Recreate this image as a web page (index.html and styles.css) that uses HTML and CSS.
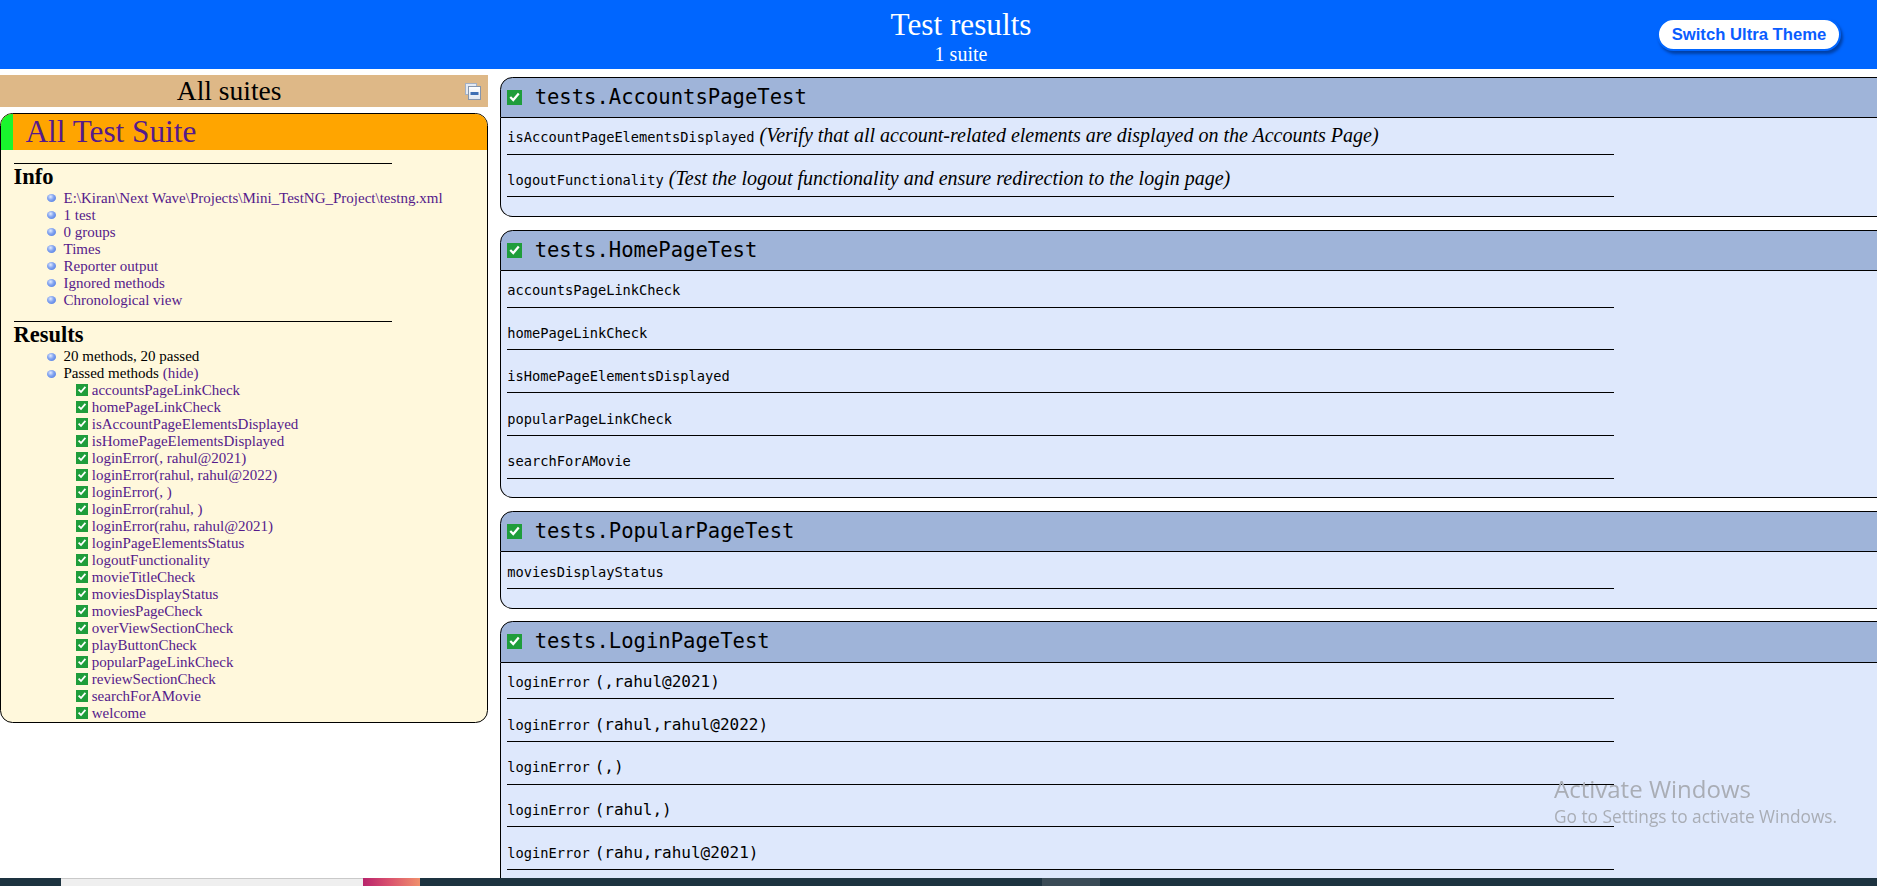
FILE: index.html
```html
<!DOCTYPE html>
<html lang="en">
<head>
<meta charset="utf-8">
<title>TestNG reports</title>
<link rel="stylesheet" href="styles.css">
</head>
<body>
<header class="banner">
  <div class="banner-title">
    <span class="title-main">Test results</span>
    <span class="title-sub">1 suite</span>
  </div>
  <button class="theme-button">Switch Ultra Theme</button>
</header>

<div class="layout">
  <nav class="navigator">
    <div class="nav-header">
      <span class="nav-header-text">All suites</span>
      <svg class="collapse-icon" width="16" height="17" viewBox="0 0 16 17">
        <defs>
          <linearGradient id="cg" x1="0" y1="0" x2="0" y2="1">
            <stop offset="0" stop-color="#ffffff"/>
            <stop offset="1" stop-color="#dfe6f0"/>
          </linearGradient>
        </defs>
        <rect x="0.5" y="0.5" width="11" height="11" fill="#e4eaf3" stroke="#a3b0c4"/>
        <rect x="3.5" y="3.5" width="12" height="13" fill="url(#cg)" stroke="#8595ad"/>
        <rect x="5.5" y="9" width="8" height="3" fill="#3d6eb3"/>
      </svg>
    </div>

    <div class="suite">
      <div class="suite-header">
        <a class="suite-name" href="#">All Test Suite</a>
      </div>
      <div class="suite-content">
        <div class="section-title">Info</div>
        <ul class="section-list">
          <li><a href="#">E:\Kiran\Next Wave\Projects\Mini_TestNG_Project\testng.xml</a></li>
          <li><a href="#">1 test</a></li>
          <li><a href="#">0 groups</a></li>
          <li><a href="#">Times</a></li>
          <li><a href="#">Reporter output</a></li>
          <li><a href="#">Ignored methods</a></li>
          <li><a href="#">Chronological view</a></li>
        </ul>
        <div class="section-title">Results</div>
        <ul class="section-list">
          <li>20 methods, 20 passed</li>
          <li>Passed methods <a href="#">(hide)</a>
            <div class="method-list">
              <div class="method-item"><svg class="ok" width="12" height="12" viewBox="0 0 12 12"><rect width="12" height="12" fill="#1f9d3b"/><path d="M2.6 5.6 L5 8 L9.4 2.8" fill="none" stroke="#fff" stroke-width="1.8"/></svg> <a href="#">accountsPageLinkCheck</a></div>
              <div class="method-item"><svg class="ok" width="12" height="12" viewBox="0 0 12 12"><rect width="12" height="12" fill="#1f9d3b"/><path d="M2.6 5.6 L5 8 L9.4 2.8" fill="none" stroke="#fff" stroke-width="1.8"/></svg> <a href="#">homePageLinkCheck</a></div>
              <div class="method-item"><svg class="ok" width="12" height="12" viewBox="0 0 12 12"><rect width="12" height="12" fill="#1f9d3b"/><path d="M2.6 5.6 L5 8 L9.4 2.8" fill="none" stroke="#fff" stroke-width="1.8"/></svg> <a href="#">isAccountPageElementsDisplayed</a></div>
              <div class="method-item"><svg class="ok" width="12" height="12" viewBox="0 0 12 12"><rect width="12" height="12" fill="#1f9d3b"/><path d="M2.6 5.6 L5 8 L9.4 2.8" fill="none" stroke="#fff" stroke-width="1.8"/></svg> <a href="#">isHomePageElementsDisplayed</a></div>
              <div class="method-item"><svg class="ok" width="12" height="12" viewBox="0 0 12 12"><rect width="12" height="12" fill="#1f9d3b"/><path d="M2.6 5.6 L5 8 L9.4 2.8" fill="none" stroke="#fff" stroke-width="1.8"/></svg> <a href="#">loginError(, rahul@2021)</a></div>
              <div class="method-item"><svg class="ok" width="12" height="12" viewBox="0 0 12 12"><rect width="12" height="12" fill="#1f9d3b"/><path d="M2.6 5.6 L5 8 L9.4 2.8" fill="none" stroke="#fff" stroke-width="1.8"/></svg> <a href="#">loginError(rahul, rahul@2022)</a></div>
              <div class="method-item"><svg class="ok" width="12" height="12" viewBox="0 0 12 12"><rect width="12" height="12" fill="#1f9d3b"/><path d="M2.6 5.6 L5 8 L9.4 2.8" fill="none" stroke="#fff" stroke-width="1.8"/></svg> <a href="#">loginError(, )</a></div>
              <div class="method-item"><svg class="ok" width="12" height="12" viewBox="0 0 12 12"><rect width="12" height="12" fill="#1f9d3b"/><path d="M2.6 5.6 L5 8 L9.4 2.8" fill="none" stroke="#fff" stroke-width="1.8"/></svg> <a href="#">loginError(rahul, )</a></div>
              <div class="method-item"><svg class="ok" width="12" height="12" viewBox="0 0 12 12"><rect width="12" height="12" fill="#1f9d3b"/><path d="M2.6 5.6 L5 8 L9.4 2.8" fill="none" stroke="#fff" stroke-width="1.8"/></svg> <a href="#">loginError(rahu, rahul@2021)</a></div>
              <div class="method-item"><svg class="ok" width="12" height="12" viewBox="0 0 12 12"><rect width="12" height="12" fill="#1f9d3b"/><path d="M2.6 5.6 L5 8 L9.4 2.8" fill="none" stroke="#fff" stroke-width="1.8"/></svg> <a href="#">loginPageElementsStatus</a></div>
              <div class="method-item"><svg class="ok" width="12" height="12" viewBox="0 0 12 12"><rect width="12" height="12" fill="#1f9d3b"/><path d="M2.6 5.6 L5 8 L9.4 2.8" fill="none" stroke="#fff" stroke-width="1.8"/></svg> <a href="#">logoutFunctionality</a></div>
              <div class="method-item"><svg class="ok" width="12" height="12" viewBox="0 0 12 12"><rect width="12" height="12" fill="#1f9d3b"/><path d="M2.6 5.6 L5 8 L9.4 2.8" fill="none" stroke="#fff" stroke-width="1.8"/></svg> <a href="#">movieTitleCheck</a></div>
              <div class="method-item"><svg class="ok" width="12" height="12" viewBox="0 0 12 12"><rect width="12" height="12" fill="#1f9d3b"/><path d="M2.6 5.6 L5 8 L9.4 2.8" fill="none" stroke="#fff" stroke-width="1.8"/></svg> <a href="#">moviesDisplayStatus</a></div>
              <div class="method-item"><svg class="ok" width="12" height="12" viewBox="0 0 12 12"><rect width="12" height="12" fill="#1f9d3b"/><path d="M2.6 5.6 L5 8 L9.4 2.8" fill="none" stroke="#fff" stroke-width="1.8"/></svg> <a href="#">moviesPageCheck</a></div>
              <div class="method-item"><svg class="ok" width="12" height="12" viewBox="0 0 12 12"><rect width="12" height="12" fill="#1f9d3b"/><path d="M2.6 5.6 L5 8 L9.4 2.8" fill="none" stroke="#fff" stroke-width="1.8"/></svg> <a href="#">overViewSectionCheck</a></div>
              <div class="method-item"><svg class="ok" width="12" height="12" viewBox="0 0 12 12"><rect width="12" height="12" fill="#1f9d3b"/><path d="M2.6 5.6 L5 8 L9.4 2.8" fill="none" stroke="#fff" stroke-width="1.8"/></svg> <a href="#">playButtonCheck</a></div>
              <div class="method-item"><svg class="ok" width="12" height="12" viewBox="0 0 12 12"><rect width="12" height="12" fill="#1f9d3b"/><path d="M2.6 5.6 L5 8 L9.4 2.8" fill="none" stroke="#fff" stroke-width="1.8"/></svg> <a href="#">popularPageLinkCheck</a></div>
              <div class="method-item"><svg class="ok" width="12" height="12" viewBox="0 0 12 12"><rect width="12" height="12" fill="#1f9d3b"/><path d="M2.6 5.6 L5 8 L9.4 2.8" fill="none" stroke="#fff" stroke-width="1.8"/></svg> <a href="#">reviewSectionCheck</a></div>
              <div class="method-item"><svg class="ok" width="12" height="12" viewBox="0 0 12 12"><rect width="12" height="12" fill="#1f9d3b"/><path d="M2.6 5.6 L5 8 L9.4 2.8" fill="none" stroke="#fff" stroke-width="1.8"/></svg> <a href="#">searchForAMovie</a></div>
              <div class="method-item"><svg class="ok" width="12" height="12" viewBox="0 0 12 12"><rect width="12" height="12" fill="#1f9d3b"/><path d="M2.6 5.6 L5 8 L9.4 2.8" fill="none" stroke="#fff" stroke-width="1.8"/></svg> <a href="#">welcome</a></div>
            </div>
          </li>
        </ul>
      </div>
    </div>
  </nav>

  <main class="wrapper">
    <section class="class-panel">
      <div class="panel-header"><svg class="ok-lg" width="15" height="15" viewBox="0 0 12 12"><rect width="12" height="12" fill="#1f9d3b"/><path d="M2.6 5.6 L5 8 L9.4 2.8" fill="none" stroke="#fff" stroke-width="1.8"/></svg> <span class="class-name">tests.AccountsPageTest</span></div>
      <div class="panel-content">
        <div class="method-content"><span class="method-name">isAccountPageElementsDisplayed</span> <em>(Verify that all account-related elements are displayed on the Accounts Page)</em></div>
        <div class="method-content"><span class="method-name">logoutFunctionality</span> <em>(Test the logout functionality and ensure redirection to the login page)</em></div>
      </div>
    </section>

    <section class="class-panel">
      <div class="panel-header"><svg class="ok-lg" width="15" height="15" viewBox="0 0 12 12"><rect width="12" height="12" fill="#1f9d3b"/><path d="M2.6 5.6 L5 8 L9.4 2.8" fill="none" stroke="#fff" stroke-width="1.8"/></svg> <span class="class-name">tests.HomePageTest</span></div>
      <div class="panel-content">
        <div class="method-content"><span class="method-name">accountsPageLinkCheck</span></div>
        <div class="method-content"><span class="method-name">homePageLinkCheck</span></div>
        <div class="method-content"><span class="method-name">isHomePageElementsDisplayed</span></div>
        <div class="method-content"><span class="method-name">popularPageLinkCheck</span></div>
        <div class="method-content"><span class="method-name">searchForAMovie</span></div>
      </div>
    </section>

    <section class="class-panel">
      <div class="panel-header"><svg class="ok-lg" width="15" height="15" viewBox="0 0 12 12"><rect width="12" height="12" fill="#1f9d3b"/><path d="M2.6 5.6 L5 8 L9.4 2.8" fill="none" stroke="#fff" stroke-width="1.8"/></svg> <span class="class-name">tests.PopularPageTest</span></div>
      <div class="panel-content">
        <div class="method-content"><span class="method-name">moviesDisplayStatus</span></div>
      </div>
    </section>

    <section class="class-panel">
      <div class="panel-header"><svg class="ok-lg" width="15" height="15" viewBox="0 0 12 12"><rect width="12" height="12" fill="#1f9d3b"/><path d="M2.6 5.6 L5 8 L9.4 2.8" fill="none" stroke="#fff" stroke-width="1.8"/></svg> <span class="class-name">tests.LoginPageTest</span></div>
      <div class="panel-content">
        <div class="method-content"><span class="method-name">loginError</span> <span class="parameters">(,rahul@2021)</span></div>
        <div class="method-content"><span class="method-name">loginError</span> <span class="parameters">(rahul,rahul@2022)</span></div>
        <div class="method-content"><span class="method-name">loginError</span> <span class="parameters">(,)</span></div>
        <div class="method-content"><span class="method-name">loginError</span> <span class="parameters">(rahul,)</span></div>
        <div class="method-content"><span class="method-name">loginError</span> <span class="parameters">(rahu,rahul@2021)</span></div>
      </div>
    </section>
  </main>
</div>

<div class="activate">
  <div class="activate-title">Activate Windows</div>
  <div class="activate-sub">Go to Settings to activate Windows.</div>
</div>

<div class="taskbar">
  <span class="tb-gap tb-start"></span>
  <span class="tb-window"></span>
  <span class="tb-app"></span>
  <span class="tb-gap tb-mid"></span>
  <span class="tb-tray"></span>
</div>
</body>
</html>
```

FILE: styles.css
```css
html {
  overflow: hidden;
}

body {
  margin: 0;
  width: 1922px;
  height: 886px;
  overflow: hidden;
  font-family: "Liberation Serif", "Times New Roman", serif;
  background: #ffffff;
  color: #000000;
}

a {
  color: #551a8b;
  text-decoration: none;
}

/* ---------- top banner ---------- */
.banner {
  box-sizing: content-box;
  height: 56.25px;
  padding: 6.25px;
  margin-bottom: 6.25px;
  background-color: #0066ff;
  color: #ffffff;
  display: grid;
  grid-template-columns: 1fr auto 1fr;
  text-align: center;
}

.banner-title {
  grid-column: 2;
  display: flex;
  flex-direction: column;
  align-items: center;
  padding-top: 1px;
}

.title-main {
  font-size: 31.25px;
  line-height: 35.9px;
}

.title-sub {
  font-size: 20px;
  line-height: 23px;
}

.theme-button {
  grid-column: 3;
  justify-self: end;
  align-self: start;
  margin: 11.75px 75px 0 0;
  padding: 5px 12.5px;
  border: 2px solid #0066ff;
  border-radius: 25px;
  background: #ffffff;
  color: #0a5cff;
  font-family: "Liberation Sans", Arial, sans-serif;
  font-weight: bold;
  font-size: 16.67px;
  line-height: 19.2px;
  box-shadow: 2px 3px 3px #0041a8;
}

/* ---------- layout ---------- */
.layout {
  display: grid;
  grid-template-columns: 500px 1398px;
  align-items: start;
}

/* ---------- navigator ---------- */
.nav-header {
  display: flex;
  margin: 0 12.5px 6.25px 0;
  background-color: #deb887;
  font-size: 27.5px;
  line-height: 32px;
}

.nav-header-text {
  flex: 1;
  text-align: center;
}

.collapse-icon {
  flex: none;
  margin: 8px 7px 0 6.25px;
}

.suite {
  margin: 0 12.5px 12.5px 0;
  background-color: #fff8dc;
  border: 1px solid #000;
  border-radius: 12.5px;
}

.suite-header {
  background-color: #ffa500;
  border-radius: 11.5px 11.5px 0 0;
}

.suite-name {
  display: block;
  border-left: 12.5px solid #19f52d;
  border-top-left-radius: 11.5px;
  padding-left: 12.5px;
  font-size: 31.25px;
  line-height: 36px;
  color: #551a8b;
}

.suite-content {
  margin-left: 12.5px;
  font-size: 15px;
}

.section-title {
  margin-top: 12.5px;
  width: 80%;
  border-top: 1px solid #000;
  font-size: 22.5px;
  font-weight: bold;
  line-height: 26px;
}

.section-list {
  margin: 0;
  padding-left: 50px;
  list-style: none;
}

.section-list > li {
  position: relative;
  line-height: 17px;
}

.section-list > li::before {
  content: "";
  position: absolute;
  left: -17px;
  top: 4.5px;
  width: 9px;
  height: 8px;
  border-radius: 50%;
  background: radial-gradient(circle at 40% 35%, #e2ebff 0%, #86a6f0 40%, #3f6fe0 100%);
}

.method-list {
  margin-left: 12.5px;
}

.method-item {
  line-height: 17px;
  white-space: nowrap;
}

.ok {
  vertical-align: -1px;
}

/* ---------- main panels ---------- */
.wrapper {
  min-width: 0;
  padding-top: 1.5px;
}

.class-panel {
  display: block;
}

.panel-header {
  padding: 6.25px;
  background-color: #9fb4d9;
  border: 1px solid #000;
  border-radius: 12.5px 12.5px 0 0;
  font-family: "DejaVu Sans Mono", monospace;
  font-size: 20.55px;
  line-height: 27px;
  white-space: nowrap;
}

.ok-lg {
  vertical-align: -1px;
}

.panel-content {
  padding: 6.25px;
  margin-bottom: 12.5px;
  background-color: #dee8fc;
  border: 1px solid #000;
  border-top: 0;
  border-radius: 0 0 12.5px 12.5px;
}

.method-content {
  width: 80%;
  margin-bottom: 12.5px;
  padding-bottom: 6.25px;
  border-bottom: 1px solid #000;
  font-size: 20px;
  line-height: 23px;
  white-space: nowrap;
}

.method-name {
  font-family: "DejaVu Sans Mono", monospace;
  font-size: 13.7px;
  line-height: 1;
}

.parameters {
  font-family: "DejaVu Sans Mono", monospace;
  font-size: 16px;
  line-height: 1;
}

.method-content em {
  line-height: 1;
}

/* ---------- OS overlays ---------- */
.activate {
  position: fixed;
  left: 1554px;
  top: 772.5px;
  color: #a9adb5;
  font-family: "Open Sans", "Noto Sans", sans-serif;
  pointer-events: none;
}

.activate-title {
  font-size: 24px;
  line-height: 32px;
}

.activate-sub {
  font-size: 17.3px;
  line-height: 24px;
}

.taskbar {
  position: fixed;
  left: 0;
  right: 0;
  bottom: 0;
  height: 8px;
  display: flex;
  background: #1d3340;
}

.taskbar > span {
  display: block;
  height: 100%;
}

.tb-start {
  width: 61px;
}

.tb-window {
  width: 302px;
  background: #efefef;
  box-shadow: inset 0 1px 0 #c9c9c9;
}

.tb-app {
  width: 57px;
  background: linear-gradient(90deg, #b8246c 0%, #d9506e 45%, #f0906c 100%);
}

.tb-mid {
  width: 622px;
}

.tb-tray {
  width: 58px;
  background: #3a4b56;
}
```
